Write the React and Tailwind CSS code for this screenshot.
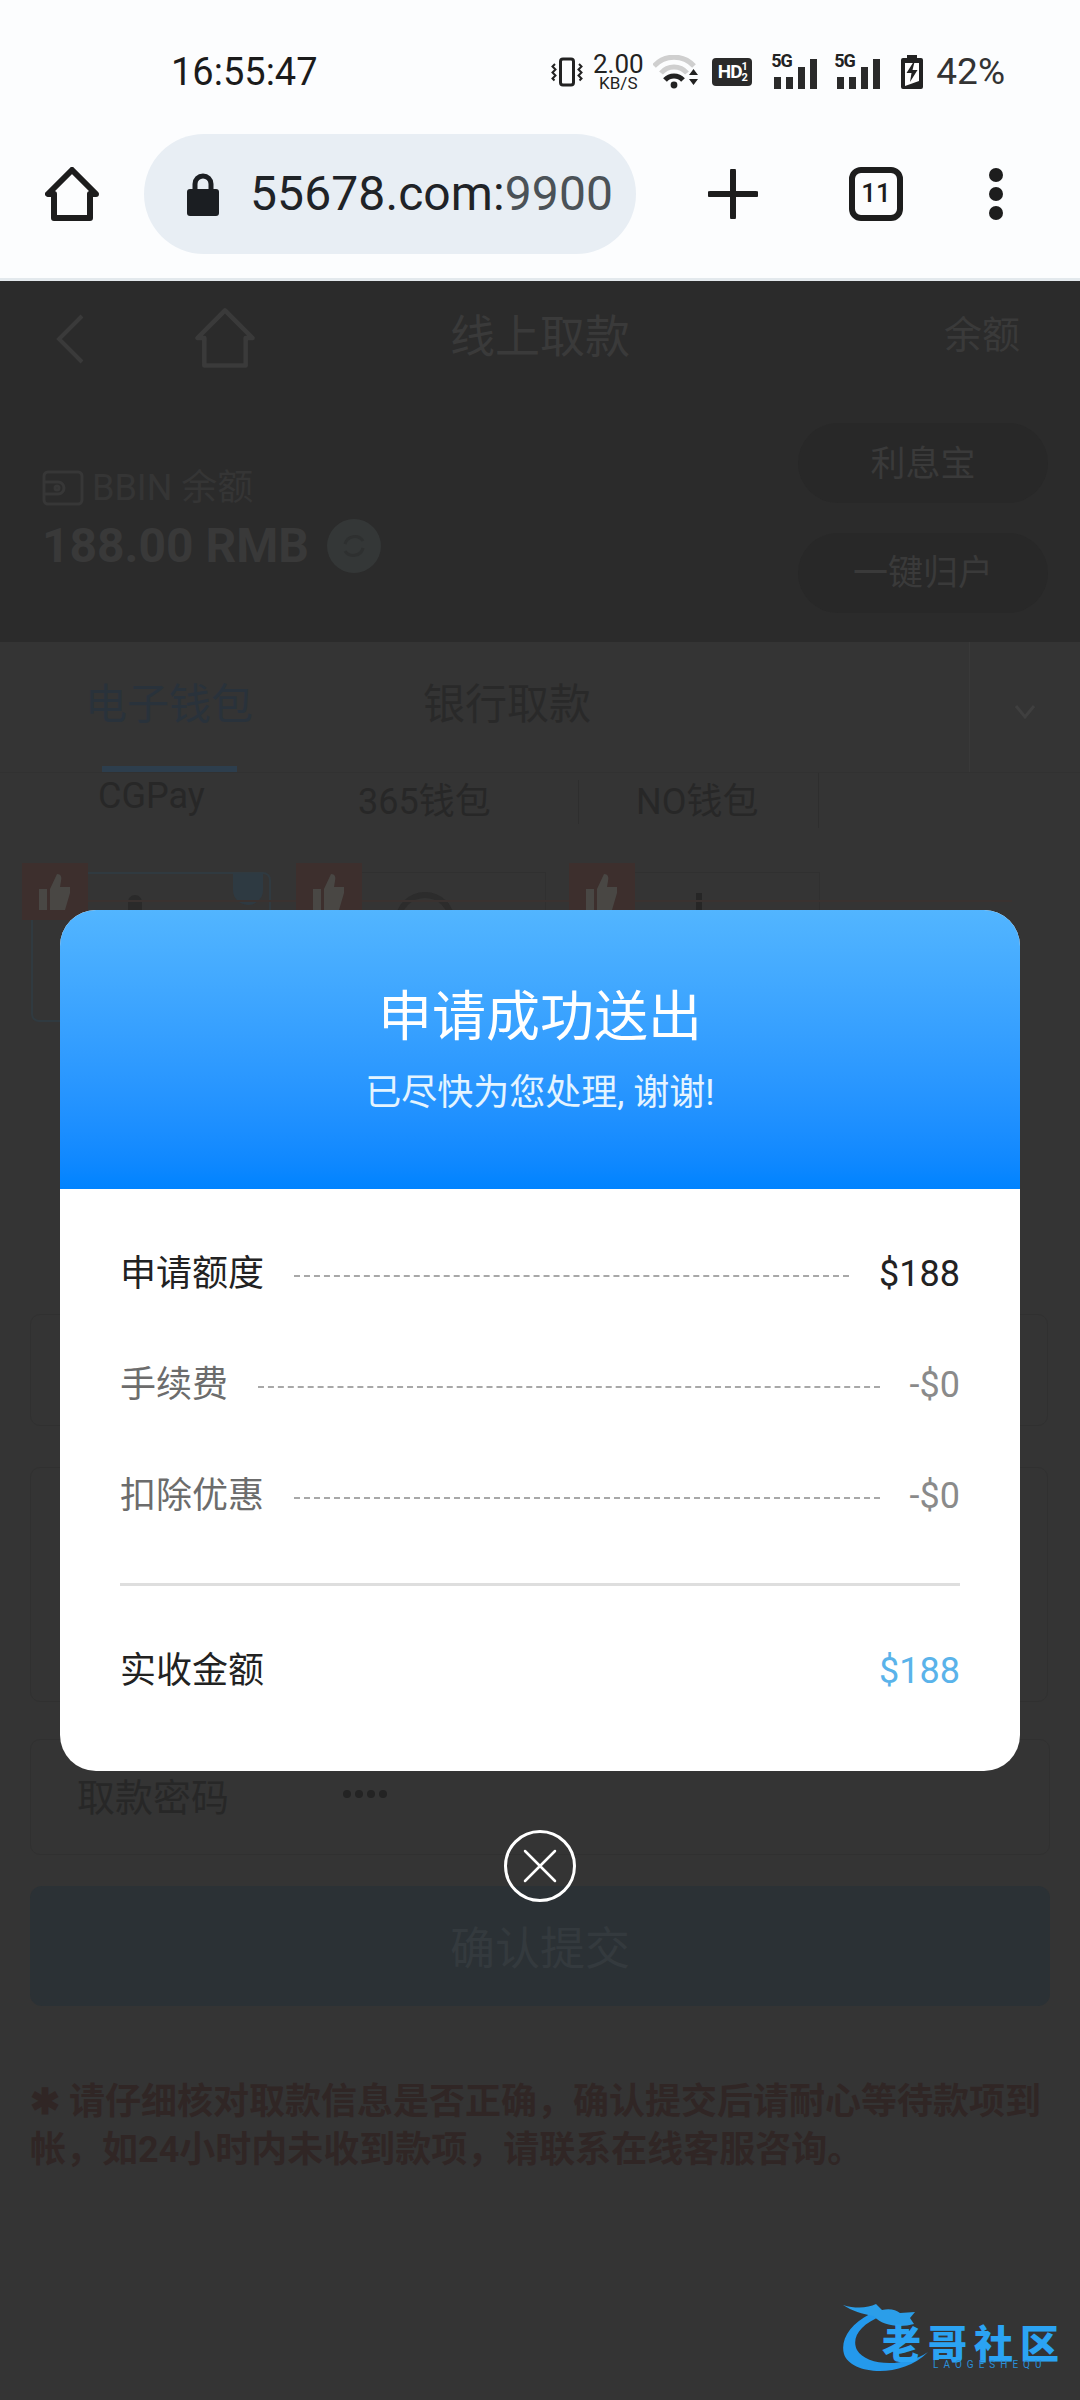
const SANS = "font-['Roboto','Noto_Sans_CJK_SC',sans-serif]";

function Vibrate() {
  return (
    <svg width="34" height="34" viewBox="0 0 34 34" fill="none" stroke="#222">
      <rect x="10.500" y="4" width="13" height="26" rx="2.500" strokeWidth="3" />
      <path d="M5 9 l-2.500 2.500 3 3 -3 3 3 3 -3 3 2 2M29 9 l2.500 2.500 -3 3 3 3 -3 3 3 3 -2 2" strokeWidth="2" />
    </svg>
  );
}

function Wifi() {
  return (
    <svg width="46" height="34" viewBox="0 0 46 34">
      <path d="M1 11 A27 27 0 0 1 41 11" fill="none" stroke="#cfcfcf" strokeWidth="5" />
      <path d="M8 18 A17 17 0 0 1 34 18" fill="none" stroke="#cfcfcf" strokeWidth="5" />
      <path d="M12 25 A12 12 0 0 1 30 25" fill="none" stroke="#222" strokeWidth="5" />
      <circle cx="21" cy="30" r="3.400" fill="#222" />
      <path d="M36 20 h9 l-4.500 -6zM36 24 h9 l-4.500 6z" fill="#222" />
    </svg>
  );
}

function Signal() {
  return (
    <div className="relative w-[46px] h-[34px]">
      <span className="absolute left-0 top-[-4px] text-[18px] leading-[20px] font-bold tracking-[-1px] text-[#222]">5G</span>
      <div className="absolute left-[3px] right-0 bottom-0 flex items-end gap-[5px]">
        <div className="w-[7px] h-[12px] bg-[#2a2a2a]" />
        <div className="w-[7px] h-[12px] bg-[#2a2a2a]" />
        <div className="w-[7px] h-[22px] bg-[#2a2a2a]" />
        <div className="w-[7px] h-[30px] bg-[#2a2a2a]" />
      </div>
    </div>
  );
}

function Battery() {
  return (
    <svg width="24" height="36" viewBox="0 0 24 36">
      <path d="M7 1 h10 v3 h4 a2 2 0 0 1 2 2 v27 a2 2 0 0 1 -2 2 h-18 a2 2 0 0 1 -2 -2 v-27 a2 2 0 0 1 2 -2 h4z" fill="#222" />
      <path d="M5 9 h14 v18 l-14 5z" fill="#fff" />
      <path d="M13.500 8 l-7 11 h5 l-1.500 9 7.500 -12 h-5 l2 -8z" fill="#222" />
    </svg>
  );
}

function HomeIcon({ color, w, h, sw }) {
  return (
    <svg width={w} height={h} viewBox="0 0 54 54" fill="none" stroke={color} strokeWidth={sw} strokeLinejoin="round">
      <path d="M27 3 L3 27 H9 V51 H45 V27 H51 Z" />
    </svg>
  );
}

function Row({ label, value, labelClass, valueClass, gapRight }) {
  return (
    <div className="flex items-center h-[40px]">
      <span className={`text-[36px] leading-[40px] ${labelClass}`}>{label}</span>
      <div className={`flex-1 ml-[30px] ${gapRight} mt-[4px] border-t-2 border-dashed border-[#a8a8a8]`} />
      <span className={`text-[36px] leading-[40px] ${valueClass}`}>{value}</span>
    </div>
  );
}

function Thumb({ left }) {
  return (
    <div className={`absolute top-[863px] ${left} w-[66px] h-[57px] bg-[#3d2f2d] flex items-center justify-center`}>
      <svg width="36" height="40" viewBox="0 0 36 40" fill="#494744">
        <path d="M2 17 h8 v21 h-8z" />
        <path d="M13 17 L20 2 c4 0 5 3 4 7 l-1 6 h10 v6 l-5 17 h-15z" />
      </svg>
    </div>
  );
}

export default function App() {
  return (
    <div className={`relative w-[1080px] h-[2400px] overflow-hidden bg-[#343434] ${SANS}`}>
      {/* Status bar */}
      <div className="h-[115px] bg-[#fcfdfe] flex items-start pt-[51px] pl-[171px] pr-[75px]">
        <span className="text-[38px] leading-[42px] text-[#1b1b1b]">16:55:47</span>
        <div className="ml-auto flex items-center h-[42px]">
          <Vibrate />
          <div className="ml-[9px] w-[50px] flex flex-col items-center text-[#222]">
            <span className="text-[26px] leading-[22px]">2.00</span>
            <span className="text-[17px] leading-[17px]">KB/S</span>
          </div>
          <div className="ml-[10px]"><Wifi /></div>
          <div className="ml-[13px] w-[40px] h-[28px] rounded-[4px] bg-[#2a2a2a] text-white flex items-center justify-center text-[19px] font-bold tracking-[-1px]">
            HD<span className="text-[11px] leading-[11px] flex flex-col items-center"><span>1</span><span>2</span></span>
          </div>
          <div className="ml-[19px]"><Signal /></div>
          <div className="ml-[17px]"><Signal /></div>
          <div className="ml-[20px]"><Battery /></div>
          <span className="ml-[12px] text-[37px] leading-[42px] text-[#333]">42%</span>
        </div>
      </div>

      {/* Browser toolbar */}
      <div className="relative h-[166px] bg-[#fcfdfe] border-b-[3px] border-[#e3e9ed] flex items-center pl-[45px] pb-[6px]">
        <HomeIcon color="#1d1d1d" w={54} h={54} sw={6} />
        <div className="ml-[45px] w-[492px] h-[120px] rounded-[60px] bg-[#e8eef4] flex items-center pl-[42px]">
          <svg width="34" height="44" viewBox="0 0 34 44">
            <path d="M9 20 v-8 a8 8 0 0 1 16 0 v8" fill="none" stroke="#1b1e22" strokeWidth="5" />
            <rect x="1" y="17" width="32" height="27" rx="3" fill="#1b1e22" />
          </svg>
          <span className="ml-[30px] text-[48px] leading-[56px] text-[#1f2327] tracking-[0.1px]">
            55678.com:<span className="text-[#4b5257]">9900</span>
          </span>
        </div>
        <svg className="ml-[72px]" width="50" height="50" viewBox="0 0 50 50" stroke="#1d1d1d" strokeWidth="6" strokeLinecap="round">
          <path d="M25 2 v46M2 25 h46" />
        </svg>
        <div className="ml-[91px] w-[54px] h-[54px] rounded-[12px] border-[6px] border-[#1d1d1d] flex items-center justify-center text-[26px] font-medium text-[#1d1d1d]">11</div>
        <div className="ml-[86px] flex flex-col gap-[5px]">
          <div className="w-[14px] h-[14px] rounded-full bg-[#1d1d1d]" />
          <div className="w-[14px] h-[14px] rounded-full bg-[#1d1d1d]" />
          <div className="w-[14px] h-[14px] rounded-full bg-[#1d1d1d]" />
        </div>
      </div>

      {/* Dimmed page: top bar and balance */}
      <div className="h-[361px] bg-[#2b2b2b] flex flex-col">
        <div className="relative h-[120px] flex items-center pl-[56px] pr-[60px]">
          <svg className="-mt-[4px]" width="28" height="50" viewBox="0 0 28 50" fill="none" stroke="#3a3a3a" strokeWidth="4">
            <path d="M26 2 L3 25 L26 48" />
          </svg>
          <div className="ml-[110px] -mt-[6px]"><HomeIcon color="#3a3a3a" w={62} h={62} sw={4} /></div>
          <span className="absolute left-0 right-0 text-center text-[45px] leading-[50px] text-[#3a3a3a] -mt-[6px]">线上取款</span>
          <span className="ml-auto text-[38px] leading-[40px] text-[#3a3a3a] -mt-[12px]">余额</span>
        </div>
        <div className="flex justify-between pl-[42px] pr-[32px] pt-[22px]">
          <div className="pt-[45px]">
            <div className="flex items-center gap-[8px]">
              <svg width="42" height="36" viewBox="0 0 42 36" fill="none" stroke="#373737" strokeWidth="3">
                <rect x="2" y="2" width="38" height="32" rx="4" />
                <path d="M2 12 h14 a6 6 0 0 1 0 12 h-14" />
                <circle cx="15" cy="18" r="2" />
              </svg>
              <span className="text-[36px] leading-[40px] text-[#353535]">BBIN 余额</span>
            </div>
            <div className="flex items-center gap-[18px] mt-[11px]">
              <span className="text-[48px] leading-[54px] font-bold text-[#393939]">188.00 RMB</span>
              <div className="w-[54px] h-[54px] rounded-full bg-[#343737] flex items-center justify-center">
                <svg width="30" height="30" viewBox="0 0 30 30" fill="none" stroke="#2e3030" strokeWidth="3">
                  <path d="M6 13 A10 10 0 0 1 24 10M24 17 A10 10 0 0 1 6 20" />
                </svg>
              </div>
            </div>
          </div>
          <div className="flex flex-col gap-[30px]">
            <div className="w-[250px] h-[80px] rounded-[40px] bg-[#282828] flex items-center justify-center text-[35px] text-[#3a3a3a] pt-[4px]">利息宝</div>
            <div className="w-[250px] h-[80px] rounded-[40px] bg-[#282828] flex items-center justify-center text-[35px] text-[#3a3a3a] pt-[2px]">一键归户</div>
          </div>
        </div>
      </div>

      {/* Dimmed page: tabs */}
      <div className="relative h-[131px] flex items-center pl-[85px] border-b border-[#313131]">
        <span className="text-[42px] leading-[50px] text-[#29323b] -mt-[4px]">电子钱包</span>
        <span className="ml-[170px] text-[42px] leading-[50px] text-[#292929] -mt-[4px]">银行取款</span>
        <div className="absolute right-[110px] top-0 bottom-0 border-l border-[#393939]" />
        <svg className="absolute right-[44px] top-[58px]" width="22" height="22" viewBox="0 0 22 22" fill="none" stroke="#3f3f3f" strokeWidth="3">
          <path d="M2 6 L11 17 L20 6" />
        </svg>
        <div className="absolute left-[102px] bottom-0 w-[135px] h-[6px] bg-[#2d3e4d]" />
      </div>
      <div className="flex items-start h-[90px] text-[36px] leading-[44px] text-[#272727]">
        <div className="w-[358px] pl-[98px] mt-[1px]">CGPay</div>
        <div className="w-[220px] mt-[7px] h-[44px]">365钱包</div>
        <div className="w-[240px] pl-[57px] mt-[7px] border-l border-[#2e2e2e]">NO钱包</div>
        <div className="h-[55px] border-l border-[#2e2e2e]" />
      </div>

      {/* Payment cards, mostly hidden behind the dialog */}
      <div className="absolute left-[31px] top-[872px] w-[240px] h-[150px] border-2 border-[#303a40] rounded-[8px]" />
      <div className="absolute left-[233px] top-[873px] w-[30px] h-[32px] rounded-b-full bg-[#2e3a42]" />
      <div className="absolute left-[306px] top-[872px] w-[240px] h-[150px] border border-[#303030]" />
      <div className="absolute left-[580px] top-[872px] w-[240px] h-[150px] border border-[#303030]" />
      <div className="absolute left-[128px] top-[895px] w-[14px] h-[20px] rounded-t-full bg-[#2a2a2a]" />
      <div className="absolute left-[395px] top-[892px] w-[60px] h-[30px] rounded-t-full border-[6px] border-[#2c2c2c]" />
      <div className="absolute left-[696px] top-[893px] w-[6px] h-[20px] bg-[#262626]" />
      <div className="absolute left-[22px] top-[900px] w-[990px] h-[2px] bg-[#3a3230]" />
      <Thumb left="left-[22px]" />
      <Thumb left="left-[296px]" />
      <Thumb left="left-[569px]" />

      {/* Dimmed page: lower form */}
      <div className="absolute left-[30px] top-[1314px] w-[1018px] h-[112px] rounded-[10px] border border-[#303030]" />
      <div className="absolute left-[30px] top-[1467px] w-[1018px] h-[235px] rounded-[10px] border border-[#303030]" />
      <div className="absolute left-[30px] top-[1739px] w-[1020px] h-[116px] rounded-[10px] border border-[#303030] flex items-center pl-[46px]">
        <span className="text-[38px] leading-[46px] text-[#272727] mt-[1px]">取款密码</span>
        <span className="ml-[114px] -mt-[6px] flex gap-[4px]">
          <i className="w-[8px] h-[8px] rounded-full bg-[#232323]" />
          <i className="w-[8px] h-[8px] rounded-full bg-[#232323]" />
          <i className="w-[8px] h-[8px] rounded-full bg-[#232323]" />
          <i className="w-[8px] h-[8px] rounded-full bg-[#232323]" />
        </span>
      </div>
      <div className="absolute left-[30px] top-[1886px] w-[1020px] h-[120px] rounded-[12px] bg-[#2b3135] flex items-center justify-center text-[45px] text-[#343a3e] pt-[8px]">确认提交</div>
      <div className="absolute left-[30px] top-[2078px] w-[1020px] text-[36px] leading-[48px] font-bold text-[#302625]">
        ✱ 请仔细核对取款信息是否正确，确认提交后请耐心等待款项到帐，如24小时内未收到款项，请联系在线客服咨询。
      </div>

      {/* Dialog */}
      <div className="absolute left-[60px] top-[910px] w-[960px] h-[861px] rounded-[36px] overflow-hidden bg-white">
        <div className="h-[279px] bg-gradient-to-b from-[#52b5ff] to-[#0083ff] flex flex-col items-center text-white pt-[70px]">
          <span className="text-[54px] leading-[76px]">申请成功送出</span>
          <span className="text-[36px] leading-[48px] mt-[13px] text-[#e4f4ff]">已尽快为您处理, 谢谢!</span>
        </div>
        <div className="pl-[60px] pr-[60px] pt-[65px]">
          <div className="flex flex-col gap-[71px]">
            <Row label="申请额度" value="$188" labelClass="text-[#222]" valueClass="text-[#222]" gapRight="mr-[30px]" />
            <Row label="手续费" value="-$0" labelClass="text-[#6c6c6c]" valueClass="text-[#8a8a8a]" gapRight="mr-[30px]" />
            <Row label="扣除优惠" value="-$0" labelClass="text-[#6c6c6c]" valueClass="text-[#8a8a8a]" gapRight="mr-[30px]" />
          </div>
          <div className="mt-[67px] h-[3px] bg-[#dedede]" />
          <div className="flex items-center justify-between mt-[65px] h-[40px] text-[36px] leading-[40px]">
            <span className="text-[#222]">实收金额</span>
            <span className="text-[#5ab3ea]">$188</span>
          </div>
        </div>
      </div>

      {/* Close button */}
      <div className="absolute left-[504px] top-[1830px] w-[72px] h-[72px] rounded-full border-[3px] border-white flex items-center justify-center">
        <svg width="34" height="34" viewBox="0 0 34 34" stroke="#fff" strokeWidth="2.500" strokeLinecap="round">
          <path d="M2 2 L32 32M32 2 L2 32" />
        </svg>
      </div>

      {/* Watermark */}
      <div className="absolute left-[840px] top-[2300px] w-[230px] h-[78px]">
        <svg className="absolute left-0 top-0" width="110" height="78" viewBox="0 0 110 78">
          <path d="M30 14 C10 24 0 40 4 54 C10 74 60 80 88 52 C64 68 26 66 17 50 C11 38 20 24 42 16 Z" fill="#2499ec" />
          <path d="M3 5 C16 9 28 8 36 4 L42 10 C50 8 56 10 60 13 L75 12 L70 18 L74 24 C60 28 42 26 34 16 C22 14 12 11 3 5 Z" fill="#2b9ee9" />
        </svg>
        <span className="absolute left-[42px] top-[22px] text-[39px] leading-[38px] font-black text-[#2ba3f3] font-['Noto_Sans_CJK_SC',sans-serif] tracking-[7px] whitespace-nowrap">老哥社区</span>
        <span className="absolute left-[93px] top-[60px] text-[10px] leading-[10px] text-[#2a8fd8] tracking-[5px]">LAOGESHEQU</span>
      </div>
    </div>
  );
}
